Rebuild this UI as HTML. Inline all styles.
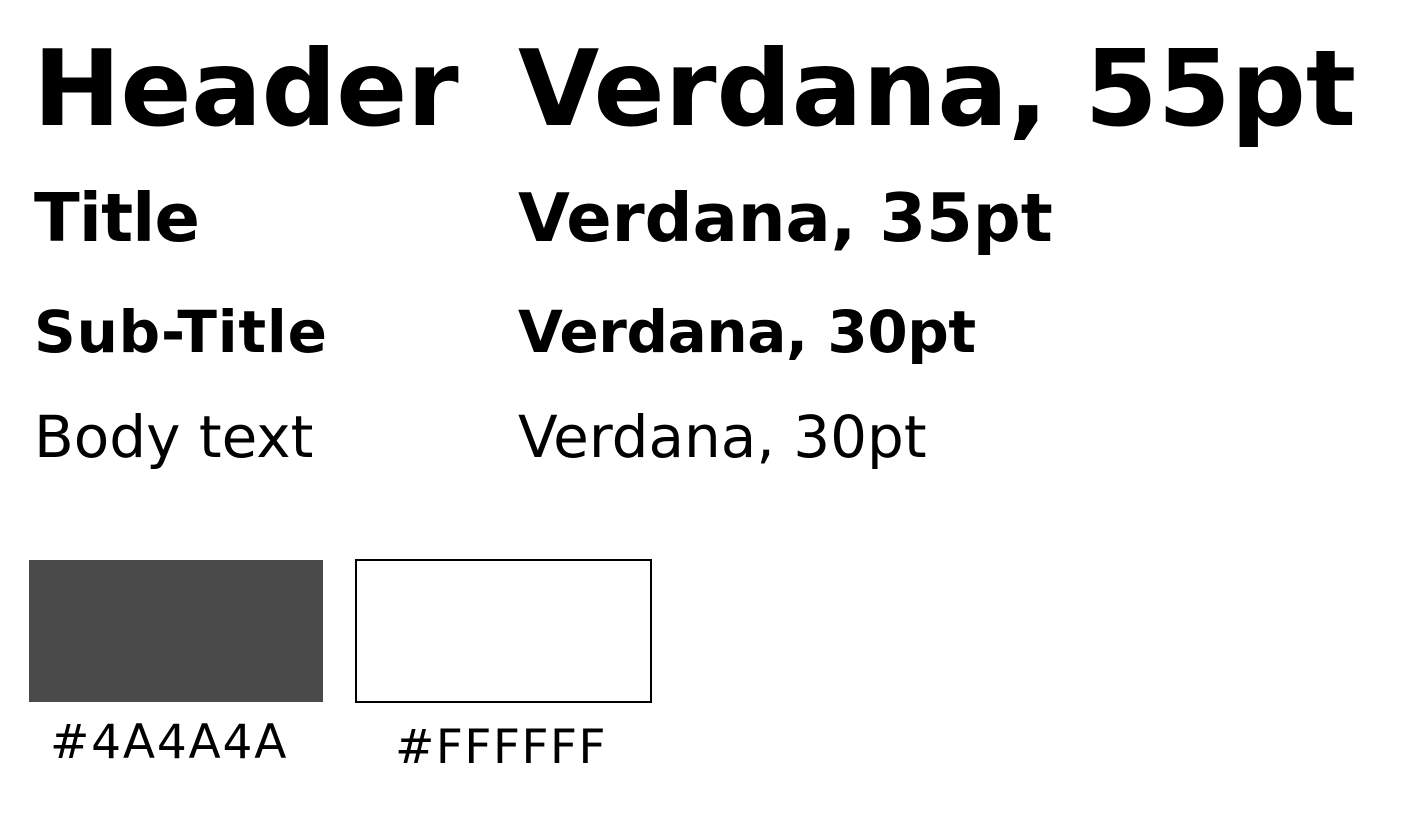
<!DOCTYPE html>
<html><head><meta charset="utf-8"><style>
html,body{margin:0;padding:0;background:#fff;width:1404px;height:820px;overflow:hidden;position:relative;font-family:"DejaVu Sans","Liberation Sans",sans-serif;color:#000}
.t{position:absolute;white-space:nowrap;line-height:1}
.b{font-weight:bold}
</style></head><body>
<div class="t b" style="left:33px;top:37px;font-size:105px;letter-spacing:-0.5px">Header</div>
<div class="t b" style="left:518px;top:37px;font-size:105px">Verdana, 55pt</div>
<div class="t b" style="left:34px;top:185px;font-size:67px;letter-spacing:-0.8px">Title</div>
<div class="t b" style="left:518px;top:185px;font-size:67px">Verdana, 35pt</div>
<div class="t b" style="left:34px;top:303px;font-size:58px;letter-spacing:0.8px">Sub-Title</div>
<div class="t b" style="left:518px;top:303px;font-size:58px;letter-spacing:-0.4px">Verdana, 30pt</div>
<div class="t" style="left:34px;top:408px;font-size:58px">Body text</div>
<div class="t" style="left:518px;top:408px;font-size:58px">Verdana, 30pt</div>
<div style="position:absolute;left:29px;top:560px;width:294px;height:142px;background:#4a4a4a"></div>
<div style="position:absolute;left:355px;top:559px;width:293px;height:140px;border:2px solid #000;background:#fff"></div>
<div class="t" style="left:50px;top:719px;font-size:47px;letter-spacing:1.8px">#4A4A4A</div>
<div class="t" style="left:395px;top:724px;font-size:47px;letter-spacing:1.5px">#FFFFFF</div>
</body></html>
